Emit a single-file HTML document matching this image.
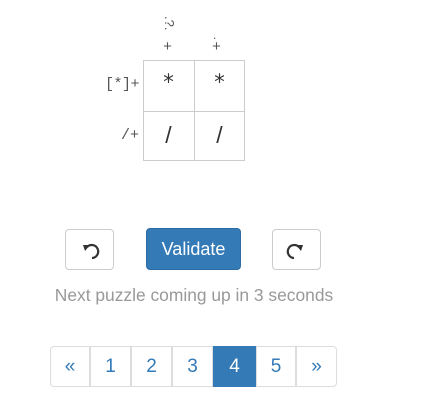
<!DOCTYPE html>
<html><head><meta charset="utf-8"><style>
body{margin:0;width:431px;height:413px;background:#fff;font-family:"Liberation Sans",sans-serif;position:relative;overflow:hidden}
.a{position:absolute}
.btn{position:absolute;top:229px;width:49px;height:41px;box-sizing:border-box;border:1px solid #ccc;border-radius:4px;background:#fff}
.pg{position:absolute;top:346px;height:41px;box-sizing:border-box;border:1px solid #ddd;color:#337ab7;font-size:19px;text-align:center;line-height:39px;margin-left:-1px}
</style></head><body>
<div class="a" style="left:143px;top:60px;width:102px;height:101px;border:1px solid #ccc;box-sizing:border-box"></div>
<div class="a" style="left:194px;top:60px;width:1px;height:101px;background:#ccc"></div>
<div class="a" style="left:143px;top:111px;width:102px;height:1px;background:#ccc"></div>
<div class="a" style="left:143px;top:70px;width:51px;text-align:center;font-size:21px;color:#333;font-family:'DejaVu Sans',sans-serif">*</div>
<div class="a" style="left:194px;top:70px;width:51px;text-align:center;font-size:21px;color:#333;font-family:'DejaVu Sans',sans-serif">*</div>
<div class="a" style="left:143px;top:122px;width:51px;text-align:center;font-size:23px;color:#333">/</div>
<div class="a" style="left:194px;top:122px;width:51px;text-align:center;font-size:23px;color:#333">/</div>
<div class="a" style="left:80px;top:76px;width:59px;text-align:right;font-family:'Liberation Mono',monospace;font-size:15px;color:#555;letter-spacing:-0.5px">[*]+</div>
<div class="a" style="left:80px;top:127px;width:59px;text-align:right;font-family:'Liberation Mono',monospace;font-size:15px;color:#555">/+</div>
<div class="a" style="top:16px;font-size:13px;color:#555;transform:rotate(90deg);transform-origin:left top;left:175px;line-height:12px">.?.</div>
<div class="a" style="left:163px;top:39px;font-size:15px;color:#555;font-family:'Liberation Mono',monospace">+</div>
<div class="a" style="left:213px;top:28px;font-size:12px;color:#555">.</div>
<div class="a" style="left:212px;top:39px;font-size:15px;color:#555;font-family:'Liberation Mono',monospace">+</div>
<div class="btn" style="left:65px"><svg width="47" height="39" viewBox="0 0 47 39"><path d="M21 17 A6.5 6.5 0 1 1 26 28" fill="none" stroke="#333" stroke-width="2.2"/><path d="M17 15 L24 15 L19 21 Z" fill="#333"/></svg></div>
<div class="a" style="left:146px;top:228px;width:95px;height:42px;background:#337ab7;border:1px solid #2e6da4;box-sizing:border-box;border-radius:4px;color:#fff;font-size:18px;text-align:center;line-height:40px">Validate</div>
<div class="btn" style="left:272px"><svg width="47" height="39" viewBox="0 0 47 39"><path d="M21 28 A6.5 6.5 0 1 1 26 17" fill="none" stroke="#333" stroke-width="2.2"/><path d="M30 15 L23 15 L28 21 Z" fill="#333"/></svg></div>
<div class="a" style="left:0;width:388px;top:285px;text-align:center;color:#999;font-size:17.4px">Next puzzle coming up in 3 seconds</div>
<div class="pg" style="left:51px;width:40px;border-radius:4px 0 0 4px">«</div>
<div class="pg" style="left:91px;width:41px">1</div>
<div class="pg" style="left:132px;width:41px">2</div>
<div class="pg" style="left:173px;width:41px">3</div>
<div class="pg" style="left:214px;width:43px;background:#337ab7;border-color:#337ab7;color:#fff">4</div>
<div class="pg" style="left:257px;width:40px">5</div>
<div class="pg" style="left:297px;width:41px;border-radius:0 4px 4px 0">»</div>
</body></html>
